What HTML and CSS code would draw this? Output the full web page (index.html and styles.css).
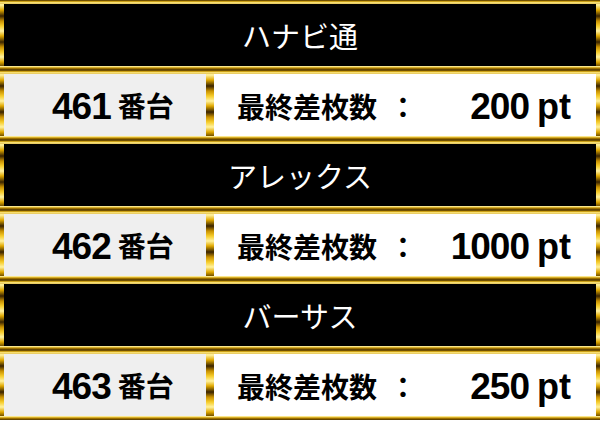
FILE: index.html
```html
<!DOCTYPE html>
<html lang="ja">
<head>
<meta charset="utf-8">
<link rel="stylesheet" href="styles.css">
</head>
<body>
<div class="board">
  <section class="group">
    <div class="frame title-frame"><div class="title">ハナビ通</div></div>
    <div class="row">
      <div class="frame no-frame"><div class="no"><span class="num">461</span><span class="unit">番台</span></div></div>
      <div class="frame diff-frame"><div class="diff"><span class="label">最終差枚数<span class="colon">：</span></span><span class="val"><span class="num">200</span><span class="pt">pt</span></span></div></div>
    </div>
  </section>
  <section class="group">
    <div class="frame title-frame"><div class="title">アレックス</div></div>
    <div class="row">
      <div class="frame no-frame"><div class="no"><span class="num">462</span><span class="unit">番台</span></div></div>
      <div class="frame diff-frame"><div class="diff"><span class="label">最終差枚数<span class="colon">：</span></span><span class="val"><span class="num">1000</span><span class="pt">pt</span></span></div></div>
    </div>
  </section>
  <section class="group">
    <div class="frame title-frame"><div class="title">バーサス</div></div>
    <div class="row">
      <div class="frame no-frame"><div class="no"><span class="num">463</span><span class="unit">番台</span></div></div>
      <div class="frame diff-frame"><div class="diff"><span class="label">最終差枚数<span class="colon">：</span></span><span class="val"><span class="num">250</span><span class="pt">pt</span></span></div></div>
    </div>
  </section>
</div>
</body>
</html>
```

FILE: styles.css
```css
* { box-sizing: border-box; }
html, body { margin: 0; padding: 0; background: #ffffff; }
body { width: 600px; height: 424px; overflow: hidden; }

.board { display: flex; flex-direction: column; width: 600px; }
.group { display: flex; flex-direction: column; }

.frame {
  padding: 4px;
  height: 70px;
  background:
    linear-gradient(to bottom, #3a2600 0px, #a87a00 1px, #f0c830 2px, #fff4b0 3px, #d6a818 4px) top / 100% 4px no-repeat,
    linear-gradient(to bottom, #fff8c8 0px, #f5d450 1px, #b88600 2px, #4a3000 4px) bottom / 100% 4px no-repeat,
    repeating-linear-gradient(to bottom, #f6cc2a 0px, #fff2a0 5px, #e0a800 10px, #3a2400 16px, #c89000 21px, #f6cc2a 26px);
}

.title-frame { width: 600px; }
.title {
  height: 100%;
  background: #000;
  color: #fff;
  display: flex;
  align-items: center;
  justify-content: center;
  font-family: "Noto Sans CJK JP", sans-serif;
  font-size: 29px;
  font-weight: 400;
  padding-top: 0;
}

.row { display: flex; }
.no-frame { width: 210px; }
.diff-frame { width: 390px; }

.no {
  height: 100%;
  background: #efefef;
  display: flex;
  align-items: center;
  padding-left: 48px;
  padding-top: 3px;
  color: #000;
}
.diff {
  height: 100%;
  background: #fff;
  display: flex;
  align-items: center;
  justify-content: space-between;
  padding-left: 23px;
  padding-right: 25px;
  padding-top: 3px;
  color: #000;
}

.num {
  font-family: "Liberation Sans", Arial, sans-serif;
  font-weight: 700;
  font-size: 37px;
  letter-spacing: -1px;
}
.unit {
  font-family: "Noto Sans CJK JP", sans-serif;
  font-weight: 700;
  font-size: 28px;
  margin-left: 7px;
  margin-bottom: 4px;
}
.label {
  font-family: "Noto Sans CJK JP", sans-serif;
  font-weight: 700;
  font-size: 28px;
  margin-bottom: 2px;
}
.colon { margin-left: 12px; }
.val { display: flex; align-items: baseline; }
.pt {
  font-family: "Liberation Sans", Arial, sans-serif;
  font-weight: 700;
  font-size: 36px;
  margin-left: 8px;
}
```
